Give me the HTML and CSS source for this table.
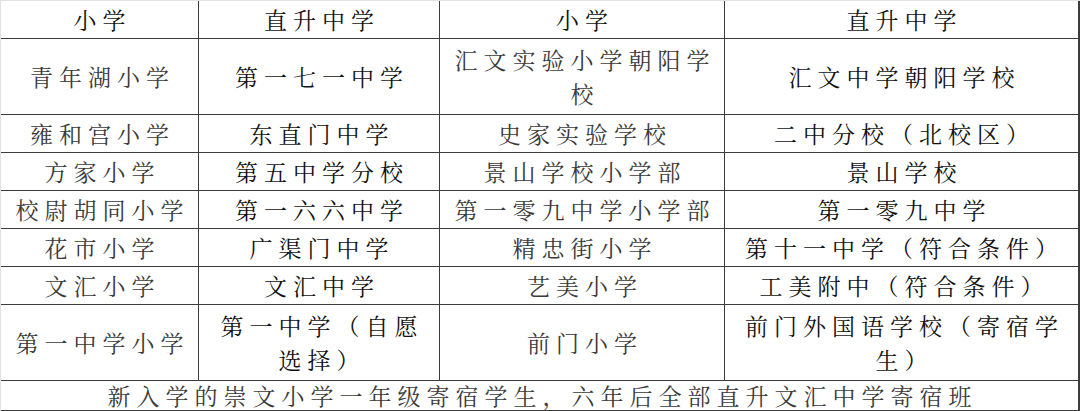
FILE: index.html
```html
<!DOCTYPE html>
<html lang="zh-CN">
<head>
<meta charset="utf-8">
<title>直升中学对照表</title>
<link rel="stylesheet" href="styles.css">
</head>
<body>
<div class="frame">
<table class="schools">
  <colgroup>
    <col class="c1"><col class="c2"><col class="c3"><col class="c4">
  </colgroup>
  <tr class="r-head">
    <td class="strong">小学</td><td class="strong">直升中学</td><td class="strong">小学</td><td class="strong last">直升中学</td>
  </tr>
  <tr class="r-tall">
    <td class="soft">青年湖小学</td><td class="strong">第一七一中学</td><td class="soft">汇文实验小学朝阳学<br>校</td><td class="strong last">汇文中学朝阳学校</td>
  </tr>
  <tr class="r-one">
    <td class="soft">雍和宫小学</td><td class="strong">东直门中学</td><td class="soft">史家实验学校</td><td class="strong last">二中分校（北校区）</td>
  </tr>
  <tr class="r-one">
    <td class="soft">方家小学</td><td class="strong">第五中学分校</td><td class="soft">景山学校小学部</td><td class="strong last">景山学校</td>
  </tr>
  <tr class="r-one">
    <td class="soft">校尉胡同小学</td><td class="strong">第一六六中学</td><td class="soft">第一零九中学小学部</td><td class="strong last">第一零九中学</td>
  </tr>
  <tr class="r-one">
    <td class="soft">花市小学</td><td class="strong">广渠门中学</td><td class="soft">精忠街小学</td><td class="strong last">第十一中学（符合条件）</td>
  </tr>
  <tr class="r-one">
    <td class="soft">文汇小学</td><td class="strong">文汇中学</td><td class="soft">艺美小学</td><td class="strong last">工美附中（符合条件）</td>
  </tr>
  <tr class="r-tall">
    <td class="soft">第一中学小学</td><td class="strong">第一中学（自愿<br>选择）</td><td class="soft">前门小学</td><td class="strong last">前门外国语学校（寄宿学<br>生）</td>
  </tr>
  <tr class="r-foot">
    <td class="soft last note" colspan="4">新入学的崇文小学一年级寄宿学生，六年后全部直升文汇中学寄宿班</td>
  </tr>
</table>
</div>
</body>
</html>
```

FILE: styles.css
```css
html, body {
  margin: 0;
  padding: 0;
  background: #ffffff;
}

.frame {
  width: 1079px;
  border-top: 1px solid #e2e2e2;
  border-left: 1px solid #e2e2e2;
}

.schools {
  width: 1079px;
  border-collapse: separate;
  border-spacing: 0;
  table-layout: fixed;
  font-family: "Noto Serif CJK SC", "Noto Sans CJK SC", serif;
  font-size: 23px;
  font-weight: 400;
  letter-spacing: 6px;
}

.c1 { width: 198px; }
.c2 { width: 241px; }
.c3 { width: 285px; }
.c4 { width: 355px; }

.schools td {
  padding: 0 0 0 6px;
  text-align: center;
  vertical-align: middle;
  line-height: 34px;
  border-right: 1px solid #3c3c3c;
  border-bottom: 1px solid #3c3c3c;
  white-space: nowrap;
}

.schools td.last {
  border-right: 2px solid #3c3c3c;
}

.r-head { height: 38px; }
.r-one { height: 38px; }
.r-tall { height: 76px; }
.r-foot { height: 30px; }

.schools .r-foot td {
  line-height: 26px;
}

.strong { color: #111111; }
.soft { color: #3a3a3a; }
```
